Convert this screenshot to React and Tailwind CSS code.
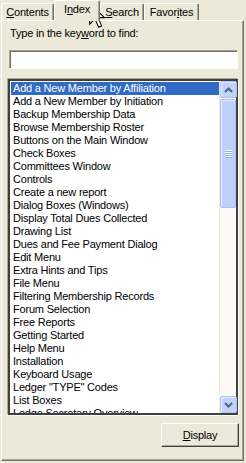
const topics = [
  "Add a New Member by Affiliation",
  "Add a New Member by Initiation",
  "Backup Membership Data",
  "Browse Membership Roster",
  "Buttons on the Main Window",
  "Check Boxes",
  "Committees Window",
  "Controls",
  "Create a new report",
  "Dialog Boxes (Windows)",
  "Display Total Dues Collected",
  "Drawing List",
  "Dues and Fee Payment Dialog",
  "Edit Menu",
  "Extra Hints and Tips",
  "File Menu",
  "Filtering Membership Records",
  "Forum Selection",
  "Free Reports",
  "Getting Started",
  "Help Menu",
  "Installation",
  "Keyboard Usage",
  'Ledger "TYPE" Codes',
  "List Boxes",
  "Lodge Secretary Overview",
];

const Tab = ({ before, hot, after, width, selected }) => {
  return (
    <div
      className={`${width} ${
        selected
          ? "h-[21px] -mb-px relative z-10"
          : "h-[17px]"
      } bg-[#ECE9D8] border-l border-t border-white border-r border-r-[#716F64] shadow-[inset_-1px_0_0_#ACA899] rounded-t-[2px] pt-[2px] text-center leading-[13px] whitespace-nowrap`}
    >
      {before}
      <span className="underline underline-offset-[1px]">{hot}</span>
      {after}
    </div>
  );
};

const ScrollButton = ({ up }) => {
  return (
    <div className="h-[17px] w-[17px] rounded-[2px] border border-[#B1C5F3] bg-[#C1D3FC] shadow-[inset_1px_1px_0_#E4ECFE] flex items-center justify-center">
      <svg width="9" height="6" viewBox="0 0 9 6">
        <polyline
          points={up ? "1,5 4.5,1.5 8,5" : "1,1 4.5,4.5 8,1"}
          fill="none"
          stroke="#4D6185"
          strokeWidth="2"
        />
      </svg>
    </div>
  );
};

const App = () => {
  const selectedIndex = 0;

  return (
    <div className="w-[246px] h-[463px] bg-[#ECE9D8] relative overflow-hidden font-['Liberation_Sans',Arial,sans-serif] text-[11px] tracking-[-0.2px] text-black">
      {/* tab strip */}
      <div className="flex items-end h-[20px] pl-[1px]">
        <Tab width="w-[53px]" hot="C" after="ontents" />
        <Tab width="w-[46px]" before="I" hot="n" after="dex" selected />
        <Tab width="w-[44px]" hot="S" after="earch" />
        <Tab width="w-[55px]" before="Favor" hot="i" after="tes" />
      </div>

      {/* panel */}
      <div className="ml-[1px] w-[243px] h-[441px] border-l border-t border-white border-r border-b border-r-[#716F64] border-b-[#716F64] shadow-[inset_-1px_-1px_0_#ACA899] pt-[6px] pl-[6px]">
        <div className="leading-[13px] pl-[2px]">
          Type in the key<span className="underline underline-offset-[1px]">w</span>ord to find:
        </div>

        <div className="mt-[10px] ml-[1px] w-[229px] h-[19px] bg-white border border-t-[#ACA899] border-l-[#ACA899] border-r-white border-b-white shadow-[inset_1px_1px_0_#716F64]"></div>

        <div className="mt-[10px] w-[230px] h-[336px] bg-white border-2 border-[#404040] shadow-[-1px_-1px_0_#ACA899,1px_1px_0_#FFFFFF] flex">
          <div className="flex-1 pl-[1px] pt-[1px] overflow-hidden">
            {topics.map((topic, indx) => {
              return (
                <div
                  key={indx}
                  className={`h-[13px] leading-[13px] pl-[2px] whitespace-nowrap ${
                    indx === selectedIndex ? "bg-[#316AC5] text-white" : ""
                  }`}
                >
                  {topic}
                </div>
              );
            })}
          </div>

          {/* scrollbar */}
          <div className="w-[17px] flex flex-col bg-[#FBFAF7] border-l border-[#EEEDE5]">
            <ScrollButton up />
            <div className="mt-px h-[109px] rounded-[2px] border border-[#A9BFF0] bg-[#BED1FB] shadow-[inset_1px_1px_0_#E2EAFE] flex flex-col items-center justify-center">
              <div className="w-[7px] h-px bg-white shadow-[0_1px_0_#8CB0F8]"></div>
              <div className="w-[7px] h-px bg-white shadow-[0_1px_0_#8CB0F8] mt-px"></div>
              <div className="w-[7px] h-px bg-white shadow-[0_1px_0_#8CB0F8] mt-px"></div>
              <div className="w-[7px] h-px bg-white shadow-[0_1px_0_#8CB0F8] mt-px"></div>
            </div>
            <div className="flex-1"></div>
            <ScrollButton />
          </div>
        </div>

        <div className="flex justify-end pr-[4px] mt-[8px]">
          <button className="w-[78px] h-[24px] bg-[#ECE9D8] border border-t-white border-l-white border-r-[#404040] border-b-[#404040] shadow-[inset_-1px_-1px_0_#ACA899] leading-[13px]">
            <span className="underline underline-offset-[1px]">D</span>isplay
          </button>
        </div>
      </div>

      {/* mouse pointer over the Index tab */}
      <svg
        className="absolute left-[89px] top-[2px]"
        width="16"
        height="27"
        viewBox="0 0 12 20"
      >
        <path
          d="M0.5,0.5 L0.5,16.5 L4.5,12.5 L7.2,18.8 L9.4,17.8 L6.8,11.6 L11.5,11.6 Z"
          fill="#FFFFFF"
          stroke="#000000"
          strokeWidth="0.8"
          strokeLinejoin="miter"
        />
      </svg>
    </div>
  );
};

export default App;
